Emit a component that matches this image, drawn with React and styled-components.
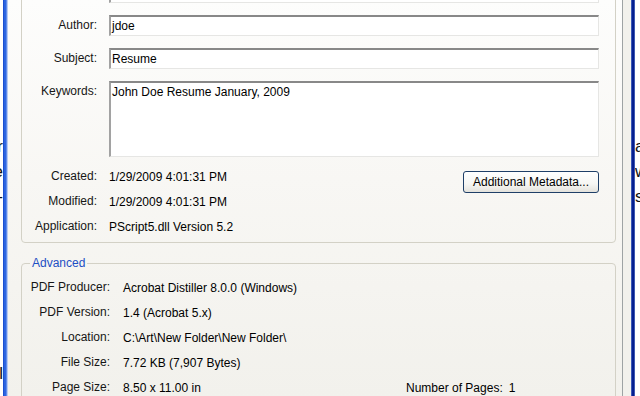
import React from "react";
import styled, { createGlobalStyle } from "styled-components";

const GlobalStyle = createGlobalStyle`
  html, body { margin: 0; padding: 0; background: #ffffff; }
  body { font-family: "Liberation Sans", Arial, sans-serif; }
  #root { width: 640px; height: 396px; }
`;

const Screen = styled.div`
  width: 640px;
  height: 396px;
  overflow: hidden;
  display: flex;
  background: #ffffff;
`;

const DocStrip = styled.div`
  flex: none;
  width: ${(p) => p.$w}px;
  overflow: hidden;
  display: flex;
  flex-direction: column;
  align-items: ${(p) => (p.$side === "left" ? "flex-end" : "flex-start")};
  padding-top: 134px;
  font-family: "Liberation Sans", Arial, sans-serif;
  font-size: 17px;
  line-height: 25px;
  color: #111;
  background: #ffffff;
`;

const DocLine = styled.span`
  white-space: nowrap;
  margin-top: ${(p) => p.$mt || 0}px;
`;

const Frame = styled.div`
  flex: none;
  width: ${(p) => p.$w}px;
  background: ${(p) => p.$bg};
`;

const Dialog = styled.div`
  flex: none;
  width: 623px;
  display: flex;
  background: #f4f3ef;
`;

const TabPanel = styled.div`
  flex: none;
  width: 615px;
  height: 396px;
  overflow: hidden;
  padding: 0 6px 0 13px;
  box-sizing: border-box;
  border-right: 1px solid #9ea3a4;
  background: linear-gradient(to bottom, #fdfdfc 0%, #f8f7f4 45%, #f2f1ec 100%);
`;

const DialogEdge = styled.div`
  flex: 1;
  background: #f2f1ec;
`;

const Content = styled.div`
  margin-top: -29px;
  display: flex;
  flex-direction: column;
`;

const Group = styled.div`
  border: 1px solid #d3d1c6;
  border-radius: 4px;
  padding: 10px 16px 3px 0;
`;

const FieldGrid = styled.div`
  display: grid;
  grid-template-columns: 75px 1fr;
  column-gap: 12px;
  row-gap: 12px;
`;

const Label = styled.div`
  text-align: right;
  font-size: 12px;
  color: #161616;
  line-height: ${(p) => (p.$top ? "14px" : "21px")};
  padding-top: ${(p) => (p.$top ? "3px" : "0")};
  white-space: nowrap;
`;

const Field = styled.div`
  box-sizing: border-box;
  height: ${(p) => (p.$multi ? 76 : 21)}px;
  background: #ffffff;
  border-top: 2px solid #888888;
  border-left: 2px solid #a2a2a2;
  border-right: 1px solid #e6e6e4;
  border-bottom: 1px solid #e6e6e4;
  padding: ${(p) => (p.$multi ? "2px 1px 0" : "0 1px")};
  display: flex;
  align-items: ${(p) => (p.$multi ? "flex-start" : "center")};
  font-size: 12px;
  line-height: 14px;
  color: #000;
  white-space: nowrap;
`;

const InfoArea = styled.div`
  margin-top: 7px;
  display: flex;
  justify-content: space-between;
  align-items: flex-start;
`;

const InfoGrid = styled.div`
  display: grid;
  grid-template-columns: 75px auto;
  column-gap: 12px;
  grid-auto-rows: 25px;
  align-items: center;
`;

const Value = styled.div`
  font-size: 12px;
  color: #000;
  white-space: nowrap;
`;

const MetaButton = styled.button`
  margin-top: 7px;
  width: 136px;
  height: 22px;
  box-sizing: border-box;
  border: 1px solid #1f3f68;
  border-radius: 3px;
  background: linear-gradient(to bottom, #ffffff 0%, #f6f6f3 60%, #e3e2dc 100%);
  font-family: "Liberation Sans", Arial, sans-serif;
  font-size: 12px;
  color: #000;
  padding: 0;
`;

const AdvGroup = styled.fieldset`
  margin: 13px 0 0;
  padding: 5px 0 0;
  border: 1px solid #d3d1c6;
  border-radius: 4px;
  min-width: 0;
`;

const Legend = styled.legend`
  margin-left: 8px;
  padding: 0 2px;
  font-size: 12px;
  line-height: 14px;
  color: #1d4fc4;
`;

const AdvGrid = styled.div`
  display: grid;
  grid-template-columns: 88px 270px 1fr;
  column-gap: 13px;
  grid-auto-rows: 25px;
  align-items: center;
`;

const PagesCell = styled.div`
  display: flex;
  gap: 6px;
  font-size: 12px;
  color: #000;
  white-space: nowrap;
`;

const fields = [
  ["Title:", ""],
  ["Author:", "jdoe"],
  ["Subject:", "Resume"],
];

const info = [
  ["Created:", "1/29/2009 4:01:31 PM"],
  ["Modified:", "1/29/2009 4:01:31 PM"],
  ["Application:", "PScript5.dll Version 5.2"],
];

const advanced = [
  ["PDF Producer:", "Acrobat Distiller 8.0.0 (Windows)"],
  ["PDF Version:", "1.4 (Acrobat 5.x)"],
  ["Location:", "C:\\Art\\New Folder\\New Folder\\"],
  ["File Size:", "7.72 KB (7,907 Bytes)"],
  ["Page Size:", "8.50 x 11.00 in"],
];

export default function App() {
  return (
    <>
      <GlobalStyle />
      <Screen>
        <DocStrip $w={3} $side="left">
          <DocLine>r</DocLine>
          <DocLine>e</DocLine>
          <DocLine>-</DocLine>
          <DocLine $mt={152}>l</DocLine>
        </DocStrip>
        <Frame
          $w={5}
          $bg="linear-gradient(to right, #0b3cc4 0px, #2a62df 1px, #2f68e2 3px, #8faef0 4px, #dfe6f5 5px)"
        />
        <Dialog>
          <TabPanel>
            <Content>
              <Group>
                <FieldGrid>
                  {fields.map(([l, v]) => (
                    <React.Fragment key={l}>
                      <Label>{l}</Label>
                      <Field>{v}</Field>
                    </React.Fragment>
                  ))}
                  <Label $top>Keywords:</Label>
                  <Field $multi>John Doe Resume January, 2009</Field>
                </FieldGrid>
                <InfoArea>
                  <InfoGrid>
                    {info.map(([l, v]) => (
                      <React.Fragment key={l}>
                        <Label>{l}</Label>
                        <Value>{v}</Value>
                      </React.Fragment>
                    ))}
                  </InfoGrid>
                  <MetaButton>Additional Metadata...</MetaButton>
                </InfoArea>
              </Group>
              <AdvGroup>
                <Legend>Advanced</Legend>
                <AdvGrid>
                  {advanced.map(([l, v], i) => (
                    <React.Fragment key={l}>
                      <Label>{l}</Label>
                      <Value>{v}</Value>
                      {i === advanced.length - 1 ? (
                        <PagesCell>
                          <span>Number of Pages:</span>
                          <span>1</span>
                        </PagesCell>
                      ) : (
                        <span />
                      )}
                    </React.Fragment>
                  ))}
                </AdvGrid>
              </AdvGroup>
            </Content>
          </TabPanel>
          <DialogEdge />
        </Dialog>
        <Frame
          $w={4}
          $bg="linear-gradient(to right, #6e8ed6 0px, #0a2394 1px, #001a8c 3px, #7d96d8 4px)"
        />
        <DocStrip $w={5} $side="right">
          <DocLine>a</DocLine>
          <DocLine>w</DocLine>
          <DocLine>s</DocLine>
        </DocStrip>
      </Screen>
    </>
  );
}
